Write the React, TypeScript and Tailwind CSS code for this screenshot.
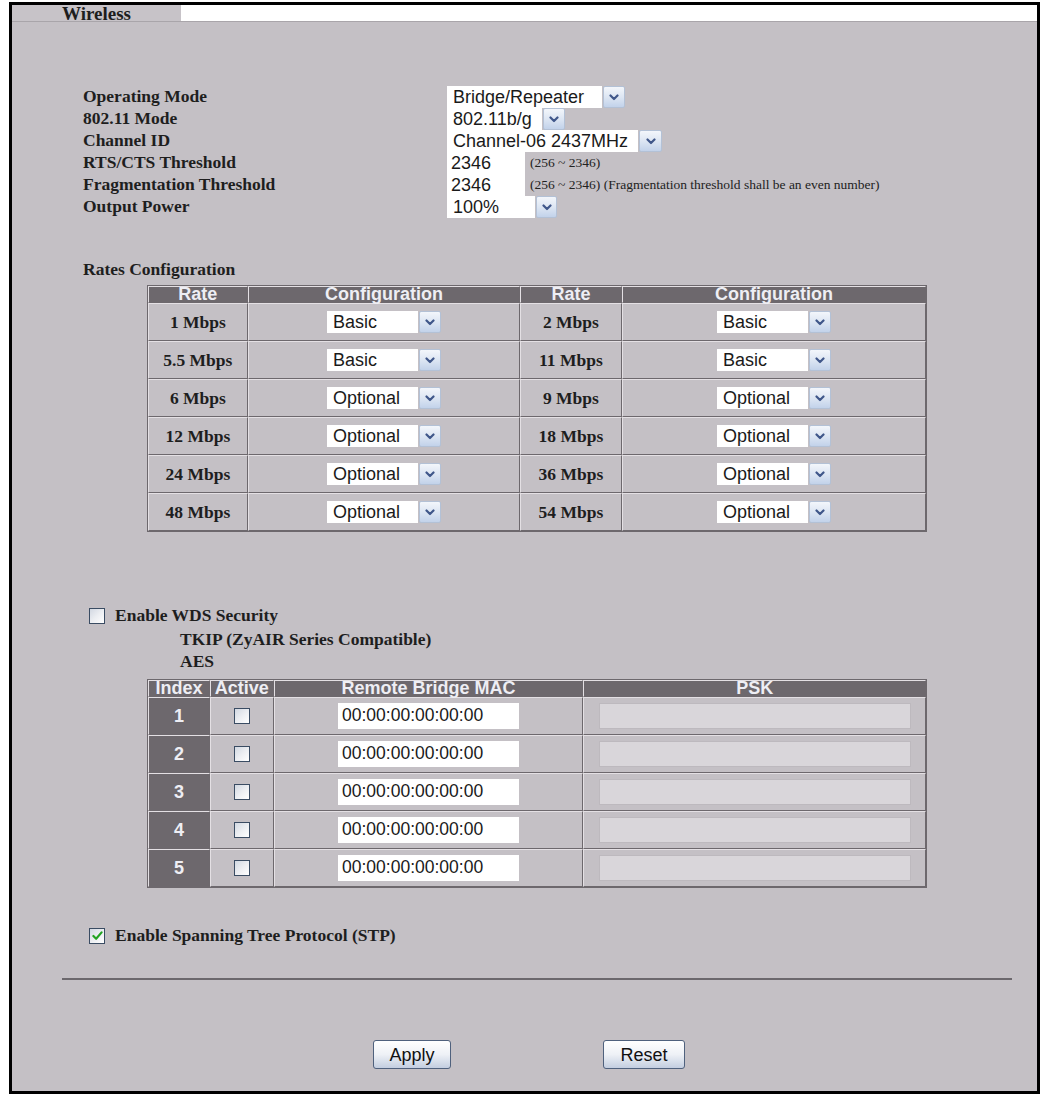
import React from "react";

const sans = "font-['Liberation_Sans',Arial,sans-serif]";
const serif = "font-['Liberation_Serif','Times_New_Roman',serif]";

function Chevron() {
  return (
    <svg width="10" height="7" viewBox="0 0 10 7">
      <path
        d="M1.5 1.5 L5 5 L8.5 1.5"
        fill="none"
        stroke="#40578a"
        strokeWidth="2.2"
        strokeLinecap="round"
        strokeLinejoin="round"
      />
    </svg>
  );
}

function Select({ value, boxClass, arrowClass = "w-[22px]" }: { value: string; boxClass: string; arrowClass?: string }) {
  return (
    <div className="flex h-[22px] items-stretch">
      <div className={`flex items-center bg-white pl-[6px] text-[18px] leading-none text-[#1a1a1a] ${sans} ${boxClass}`}>
        {value}
      </div>
      <div
        className={`ml-[1px] flex items-center justify-center rounded-[2px] border border-[#b3c1d6] bg-linear-to-b from-[#f3f6fb] via-[#dde6f3] to-[#c2d2ea] ${arrowClass}`}
      >
        <Chevron />
      </div>
    </div>
  );
}

function TextBox({ value }: { value: string }) {
  return (
    <div className={`flex h-[22px] w-[78px] items-center bg-white pl-[4px] text-[18px] leading-none text-[#1a1a1a] ${sans}`}>
      {value}
    </div>
  );
}

function Check({ checked = false }: { checked?: boolean }) {
  return (
    <span className="flex h-[16px] w-[16px] shrink-0 items-center justify-center border border-[#3a4c63] bg-linear-to-br from-[#d2d8e2] via-[#eceef2] to-white">
      {checked && (
        <svg width="11" height="10" viewBox="0 0 12 11">
          <path d="M1.5 5.5 L4.5 8.5 L10.5 1.5" fill="none" stroke="#22a322" strokeWidth="2.4" strokeLinecap="round" strokeLinejoin="round" />
        </svg>
      )}
    </span>
  );
}

const cell =
  "border-t border-l border-r border-b border-t-[#e4e0e4] border-l-[#e4e0e4] border-r-[#6d686d] border-b-[#6d686d] p-0";
const headCell = `${cell} bg-[#6d686d] text-[18px] leading-[15px] font-bold text-[#eeeef4] ${sans}`;

const formRows: { label: string; control: React.ReactNode }[] = [
  { label: "Operating Mode", control: <Select value="Bridge/Repeater" boxClass="w-[155px]" /> },
  { label: "802.11 Mode", control: <Select value="802.11b/g" boxClass="w-[95px]" /> },
  { label: "Channel ID", control: <Select value="Channel-06 2437MHz" boxClass="w-[191px]" arrowClass="w-[23px]" /> },
  {
    label: "RTS/CTS Threshold",
    control: (
      <div className="flex items-center">
        <TextBox value="2346" />
        <span className={`ml-[5px] text-[13.5px] text-[#222] ${serif}`}>(256 ~ 2346)</span>
      </div>
    ),
  },
  {
    label: "Fragmentation Threshold",
    control: (
      <div className="flex items-center">
        <TextBox value="2346" />
        <span className={`ml-[5px] text-[13.5px] text-[#222] ${serif}`}>
          (256 ~ 2346) (Fragmentation threshold shall be an even number)
        </span>
      </div>
    ),
  },
  { label: "Output Power", control: <Select value="100%" boxClass="w-[88px]" arrowClass="w-[21px]" /> },
];

const rates: [string, string, string, string][] = [
  ["1 Mbps", "Basic", "2 Mbps", "Basic"],
  ["5.5 Mbps", "Basic", "11 Mbps", "Basic"],
  ["6 Mbps", "Optional", "9 Mbps", "Optional"],
  ["12 Mbps", "Optional", "18 Mbps", "Optional"],
  ["24 Mbps", "Optional", "36 Mbps", "Optional"],
  ["48 Mbps", "Optional", "54 Mbps", "Optional"],
];

function RateLabel({ text }: { text: string }) {
  return <span className={`text-[17.5px] font-bold text-[#1e1e1e] ${serif}`}>{text}</span>;
}

function RateSelect({ value }: { value: string }) {
  return (
    <div className="flex justify-center">
      <Select value={value} boxClass="w-[91px]" />
    </div>
  );
}

export default function App() {
  return (
    <div className="h-[1096px] w-[1046px] bg-white pl-[9px] pt-[2px]">
      <div className="w-[1031px] border-[3px] border-black">
        {/* tab strip */}
        <div className="flex h-[17px] border-b border-[#a9a5aa]">
          <div className={`flex w-[169px] items-center justify-center bg-[#c7c3c8] text-[19px] font-bold leading-none text-[#1e1e1e] ${serif}`}>
            Wireless
          </div>
          <div className="flex-1 bg-white" />
        </div>

        {/* settings panel */}
        <div className="h-[1069px] bg-[#c4c0c5] pt-[64px]">
          <div className="pl-[71px]">
            {formRows.map((r) => (
              <div key={r.label} className="flex h-[22px] items-center">
                <div className={`w-[364px] text-[17.5px] font-bold leading-none text-[#1e1e1e] ${serif}`}>{r.label}</div>
                {r.control}
              </div>
            ))}

            <div className={`mt-[41px] h-[20px] text-[17.5px] font-bold leading-[20px] text-[#1e1e1e] ${serif}`}>
              Rates Configuration
            </div>

            <table className="ml-[64px] mt-[6px] w-[780px] border-separate border-spacing-0 border border-[#6d686d]">
              <thead>
                <tr className="h-[16px]">
                  <th className={`${headCell} w-[100px]`}>Rate</th>
                  <th className={`${headCell} w-[273px]`}>Configuration</th>
                  <th className={`${headCell} w-[102px]`}>Rate</th>
                  <th className={`${headCell} w-[305px]`}>Configuration</th>
                </tr>
              </thead>
              <tbody>
                {rates.map((r) => (
                  <tr key={r[0]} className="h-[38px]">
                    <td className={`${cell} text-center`}>
                      <RateLabel text={r[0]} />
                    </td>
                    <td className={cell}>
                      <RateSelect value={r[1]} />
                    </td>
                    <td className={`${cell} text-center`}>
                      <RateLabel text={r[2]} />
                    </td>
                    <td className={cell}>
                      <RateSelect value={r[3]} />
                    </td>
                  </tr>
                ))}
              </tbody>
            </table>

            <div className="ml-[6px] mt-[73px] flex h-[22px] items-center gap-[10px]">
              <Check />
              <span className={`text-[17.5px] font-bold leading-none text-[#1e1e1e] ${serif}`}>Enable WDS Security</span>
            </div>
            <div className={`ml-[97px] mt-[2px] flex h-[22px] items-center text-[17.5px] font-bold leading-none text-[#1e1e1e] ${serif}`}>
              TKIP (ZyAIR Series Compatible)
            </div>
            <div className={`ml-[97px] flex h-[22px] items-center text-[17.5px] font-bold leading-none text-[#1e1e1e] ${serif}`}>
              AES
            </div>

            <table className="ml-[64px] mt-[6px] w-[780px] border-separate border-spacing-0 border border-[#6d686d]">
              <thead>
                <tr className="h-[17px]">
                  <th className={`${headCell} w-[62px]`}>Index</th>
                  <th className={`${headCell} w-[64px]`}>Active</th>
                  <th className={`${headCell} w-[311px]`}>Remote Bridge MAC</th>
                  <th className={`${headCell} w-[343px]`}>PSK</th>
                </tr>
              </thead>
              <tbody>
                {[1, 2, 3, 4, 5].map((n) => (
                  <tr key={n} className="h-[38px]">
                    <td className={`${cell} bg-[#6d686d] text-center text-[18px] font-bold text-[#eeeef4] ${sans}`}>{n}</td>
                    <td className={cell}>
                      <div className="flex justify-center">
                        <Check />
                      </div>
                    </td>
                    <td className={cell}>
                      <div className="flex justify-center">
                        <div className={`flex h-[26px] w-[181px] items-center bg-white pl-[4px] text-[17.5px] leading-none text-[#1a1a1a] ${sans}`}>
                          00:00:00:00:00:00
                        </div>
                      </div>
                    </td>
                    <td className={cell}>
                      <div className="flex justify-center">
                        <div className="h-[26px] w-[312px] border border-[#bdb9be] bg-[#d9d6da]" />
                      </div>
                    </td>
                  </tr>
                ))}
              </tbody>
            </table>

            <div className="ml-[6px] mt-[37px] flex h-[22px] items-center gap-[10px]">
              <Check checked />
              <span className={`text-[17.5px] font-bold leading-none text-[#1e1e1e] ${serif}`}>Enable Spanning Tree Protocol (STP)</span>
            </div>
          </div>

          <div className="ml-[50px] mt-[31px] h-[2px] w-[950px] bg-[#6c686d]" />

          <div className="mt-[60px] flex pl-[361px]">
            <button
              className={`h-[29px] w-[78px] rounded-[3px] border border-[#4f617d] bg-linear-to-b from-white via-[#eef1f6] to-[#c3cee0] text-[18px] leading-none text-[#111] ${sans}`}
            >
              Apply
            </button>
            <button
              className={`ml-[152px] h-[29px] w-[82px] rounded-[3px] border border-[#4f617d] bg-linear-to-b from-white via-[#eef1f6] to-[#c3cee0] text-[18px] leading-none text-[#111] ${sans}`}
            >
              Reset
            </button>
          </div>
        </div>
      </div>
    </div>
  );
}
